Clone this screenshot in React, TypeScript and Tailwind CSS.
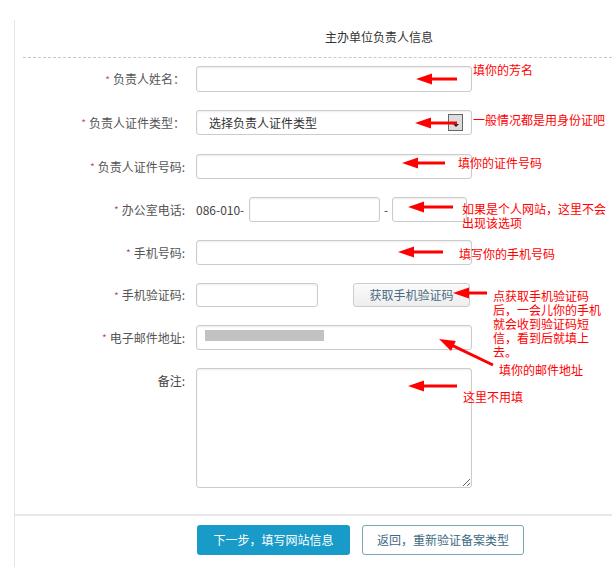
import React from 'react';

const font = { fontFamily: '"Noto Sans CJK SC", "Noto Sans", sans-serif' };

type ArrowProps = { x1: number; y1: number; x2: number; y2: number };

// tail (x1,y1) -> tip (x2,y2)
function Arrow({ x1, y1, x2, y2 }: ArrowProps) {
  const dx = x2 - x1;
  const dy = y2 - y1;
  const len = Math.sqrt(dx * dx + dy * dy);
  const ux = dx / len;
  const uy = dy / len;
  const headLen = 16;
  const half = 5.5;
  const bx = x2 - ux * headLen;
  const by = y2 - uy * headLen;
  const px = -uy * half;
  const py = ux * half;
  return (
    <g>
      <line x1={x1} y1={y1} x2={bx + ux * 2} y2={by + uy * 2} stroke="#ff0000" strokeWidth={3} />
      <polygon points={`${x2},${y2} ${bx + px},${by + py} ${bx - px},${by - py}`} fill="#ff0000" />
    </g>
  );
}

const inputCls =
  'h-full border border-[#cccccc] rounded-[3px] bg-white shadow-[inset_0_1px_2px_rgba(0,0,0,0.08)]';

function Label({ text, required = true, colon = ':' }: { text: string; required?: boolean; colon?: string }) {
  return (
    <div className="flex items-center justify-end text-[12px] text-[#555555] pr-[1px]">
      {required && <span className="text-[#b5507e] text-[10px] mr-[3px]">*</span>}
      <span>{text}</span>
      <span>{colon}</span>
    </div>
  );
}

export default function App() {
  // annotation notes; w wraps the longer ones the way the screenshot does
  const notes = [
    { x: 473, y: 63, text: '填你的芳名' },
    { x: 473, y: 113, text: '一般情况都是用身份证吧' },
    { x: 458, y: 156, text: '填你的证件号码' },
    { x: 462, y: 202, text: '如果是个人网站，这里不会出现该选项', w: 145 },
    { x: 459, y: 247, text: '填写你的手机号码' },
    { x: 493, y: 289, text: '点获取手机验证码后，一会儿你的手机就会收到验证码短信，看到后就填上去。', w: 109 },
    { x: 499, y: 363, text: '填你的邮件地址' },
    { x: 463, y: 390, text: '这里不用填' },
  ];

  return (
    <div className="relative w-[612px] h-[567px] bg-white overflow-hidden" style={font}>
      <div className="mt-[20px] ml-[14px] h-[547px] border-l border-[#e6e6e6]">
        {/* title */}
        <div className="h-[37px] pb-[3px] flex items-center pl-[310px] text-[12px] text-[#333333]">
          主办单位负责人信息
        </div>
        <div className="ml-[8px] border-t border-dashed border-[#c8c8c8]" />

        {/* form */}
        <div className="flex flex-col pt-[8px]">
          <div className="grid grid-cols-[171px_276px] gap-x-[10px] h-[26px]">
            <Label text="负责人姓名" colon=" ：" />
            <div className={inputCls} />
          </div>

          <div className="grid grid-cols-[171px_276px] gap-x-[10px] h-[25px] mt-[18px]">
            <Label text="负责人证件类型" colon=" ：" />
            <div className={`${inputCls} flex items-center justify-between pl-[12px] pr-[8px] text-[12px] text-[#333333]`}>
              <span>选择负责人证件类型</span>
              <div className="w-[15px] h-[17px] border border-[#666666] bg-[#dcdcdc] flex items-end justify-center pb-[3px]">
                <div className="w-0 h-0 border-l-[3px] border-r-[3px] border-t-[3px] border-l-transparent border-r-transparent border-t-[#222222]" />
              </div>
            </div>
          </div>

          <div className="grid grid-cols-[171px_276px] gap-x-[10px] h-[25px] mt-[19px]">
            <Label text="负责人证件号码" />
            <div className={inputCls} />
          </div>

          <div className="grid grid-cols-[171px_276px] gap-x-[10px] h-[25px] mt-[18px]">
            <Label text="办公室电话" />
            <div className="flex items-center h-full text-[12px] text-[#444444]">
              <span className="w-[53px]">086-010-</span>
              <div className={`${inputCls} w-[131px]`} />
              <span className="w-[12px] text-center">-</span>
              <div className={`${inputCls} w-[75px]`} />
            </div>
          </div>

          <div className="grid grid-cols-[171px_276px] gap-x-[10px] h-[25px] mt-[18px]">
            <Label text="手机号码" />
            <div className={inputCls} />
          </div>

          <div className="grid grid-cols-[171px_276px] gap-x-[10px] h-[24px] mt-[18px]">
            <Label text="手机验证码" />
            <div className="flex items-center h-full justify-between">
              <div className={`${inputCls} w-[122px]`} />
              <button className="h-full w-[117px] mr-[2px] border border-[#cccccc] rounded-[3px] bg-gradient-to-b from-[#fafafa] to-[#eeeeee] text-[12px] text-[#4b6b82]">
                获取手机验证码
              </button>
            </div>
          </div>

          <div className="grid grid-cols-[171px_276px] gap-x-[10px] h-[25px] mt-[18px]">
            <Label text="电子邮件地址" />
            <div className={`${inputCls} pl-[8px] pt-[4px]`}>
              <div className="w-[119px] h-[11px] bg-[#c2c2c2]" />
            </div>
          </div>

          <div className="grid grid-cols-[171px_276px] gap-x-[10px] h-[120px] mt-[18px]">
            <div className="flex justify-end pt-[4px] text-[12px] text-[#444444] pr-[1px]">备注:</div>
            <textarea className={`${inputCls} block w-full resize outline-none`} />
          </div>
        </div>

        {/* footer */}
        <div className="mt-[26px] border-t-2 border-[#e8e8e8]" />
        <div className="flex pl-[182px] pt-[9px] gap-[12px]">
          <button className="w-[153px] h-[30px] rounded-[3px] bg-[#199bc9] text-white text-[12px]">
            下一步，填写网站信息
          </button>
          <button className="w-[162px] h-[30px] rounded-[3px] border border-[#7aa5b5] bg-white text-[#3d6a84] text-[12px]">
            返回，重新验证备案类型
          </button>
        </div>
      </div>

      {/* annotations drawn on top */}
      <svg className="absolute inset-0 pointer-events-none" width={612} height={567}>
        <Arrow x1={457} y1={79} x2={416} y2={79} />
        <Arrow x1={457} y1={123} x2={415} y2={123} />
        <Arrow x1={445} y1={163} x2={402} y2={163} />
        <Arrow x1={453} y1={207} x2={408} y2={207} />
        <Arrow x1={443} y1={252} x2={398} y2={252} />
        <Arrow x1={487} y1={293} x2={453} y2={293} />
        <Arrow x1={493} y1={365} x2={439} y2={339} />
        <Arrow x1={457} y1={386} x2={408} y2={386} />
      </svg>
      {notes.map((n, i) => (
        <div
          key={i}
          className={`absolute text-[12px] leading-[14px] text-[#ff0000] ${n.w ? '' : 'whitespace-nowrap'}`}
          style={{ left: n.x, top: n.y, width: n.w }}
        >
          {n.text}
        </div>
      ))}
    </div>
  );
}
